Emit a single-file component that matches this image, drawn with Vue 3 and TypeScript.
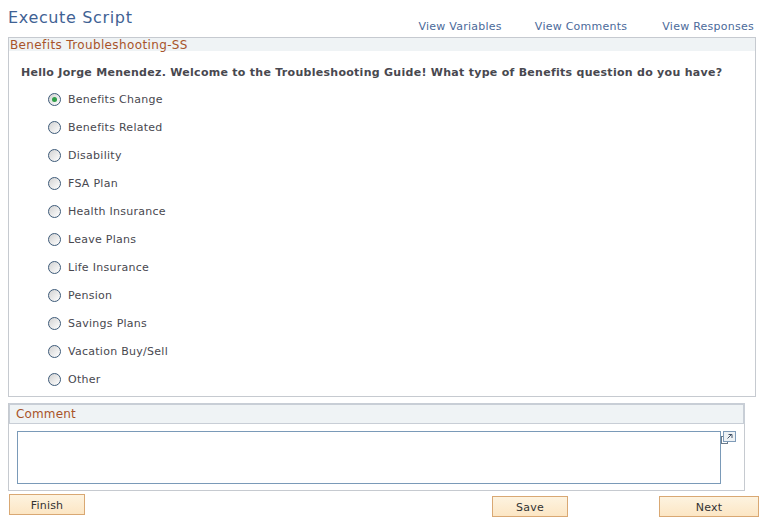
<script setup lang="ts">
const options: string[] = ['Benefits Change','Benefits Related','Disability','FSA Plan','Health Insurance','Leave Plans','Life Insurance','Pension','Savings Plans','Vacation Buy/Sell','Other']
</script>

<template>
  <div class="page">
    <div class="top">
      <h1 class="title">Execute Script</h1>
      <nav class="links">
        <a>View Variables</a><a>View Comments</a><a>View Responses</a>
      </nav>
    </div>
    <section class="script">
      <div class="script-head">Benefits Troubleshooting-SS</div>
      <p class="question">Hello Jorge Menendez. Welcome to the Troubleshooting Guide! What type of Benefits question do you have?</p>
      <ul class="options">
        <li v-for="(o, i) in options" :key="o">
          <span class="radio" :class="{ on: i === 0 }"></span>{{ o }}
        </li>
      </ul>
    </section>
    <section class="comment">
      <div class="comment-head">Comment</div>
      <div class="comment-body">
        <div class="box"></div>
        <svg class="expand" width="16" height="13" viewBox="0 0 16 13">
          <rect x="0.5" y="5.5" width="6" height="7" fill="#fff" stroke="#6b7b8b"/>
          <rect x="2.5" y="0.5" width="12" height="10" fill="#eef2f5" stroke="#7f9bb8"/>
          <path d="M6.5 7.5l4-4M7.5 3.5h3.5v3.5" fill="none" stroke="#44546a"/>
        </svg>
      </div>
    </section>
    <div class="buttons">
      <button class="finish">Finish</button>
      <div class="right">
        <button class="save">Save</button>
        <button class="next">Next</button>
      </div>
    </div>
  </div>
</template>

<style>
html, body { background: #fff; }
</style>

<style scoped>
.page { width: 771px; height: 526px; overflow: hidden; box-sizing: border-box; padding: 8px 0 0 8px; font-family: "DejaVu Sans", Verdana, sans-serif; font-size: 11px; color: #48484f; }
.top { display: flex; justify-content: space-between; height: 29px; padding-right: 17px; }
.title { margin: 0; font-weight: 400; font-size: 16px; line-height: 19px; color: #3f6294; letter-spacing: 0.65px; }
.links { display: flex; gap: 33px; padding-top: 12px; color: #4b6a9a; line-height: 14px; letter-spacing: 0.25px; }
.links a:last-child { margin-left: 2px; }
.script { width: 748px; height: 360px; box-sizing: border-box; border: 1px solid #c6cad0; }
.script-head { height: 13px; background: #eff3f5; color: #a8532a; font-size: 12px; line-height: 14px; padding-left: 1px; white-space: nowrap; letter-spacing: 0.37px; }
.question { margin: 0; padding: 15px 0 0 12px; font-weight: 700; line-height: 14px; white-space: nowrap; letter-spacing: 0.28px; }
.options { list-style: none; margin: 0; padding: 5px 0 0 39px; }
.options li { height: 28px; display: flex; align-items: center; gap: 7px; letter-spacing: 0.27px; }
.radio { width: 13px; height: 13px; box-sizing: border-box; border: 1px solid #3d5a78; border-radius: 50%; background: linear-gradient(135deg, #d2d2d2, #fff); position: relative; }
.radio.on::after { content: ""; position: absolute; left: 3px; top: 3px; width: 5px; height: 5px; border-radius: 50%; background: #2f9e48; }
.comment { width: 737px; height: 88px; margin-top: 6px; box-sizing: border-box; border: 1px solid #c6cad0; border-top: 0; }
.comment-head { height: 21px; box-sizing: border-box; border-style: solid; border-color: #c8ced6; border-width: 2px 2px 1px 1px; background: #eff3f5; color: #a8532a; font-size: 12px; line-height: 19px; padding-left: 6px; margin-right: -1px; letter-spacing: 0.15px; }
.comment-body { display: flex; padding: 7px 0 0 8px; align-items: flex-start; }
.box { width: 704px; height: 53px; box-sizing: border-box; border: 1px solid #7a9ab8; background: #fff; flex: none; }
.buttons { display: flex; justify-content: space-between; width: 750px; margin-left: 1px; margin-top: 3px; }
button { font: inherit; color: #333; background: linear-gradient(#fdf3e0, #fce6c4); border: 1px solid #d9a873; height: 21px; width: 76px; padding: 1px 0 0; letter-spacing: 0.2px; }
.right { display: flex; gap: 91px; margin-top: 2px; }
.next { width: 100px; }
</style>
